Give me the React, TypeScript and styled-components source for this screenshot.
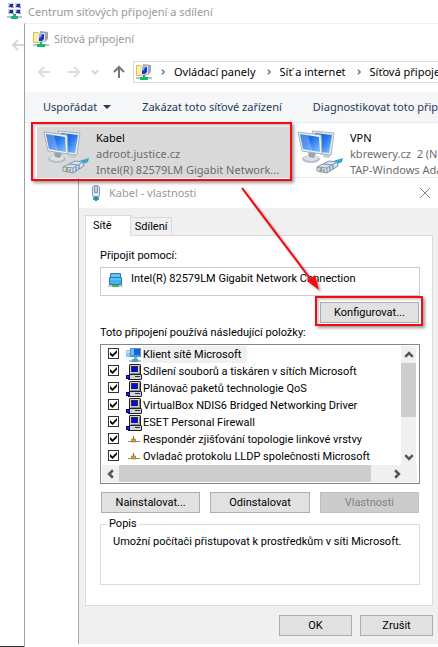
import React from "react";
import styled, { createGlobalStyle, css } from "styled-components";

const uiFont = `"Noto Sans", "Open Sans", sans-serif`;
const dialogFont = `Roboto, "Liberation Sans", Arial, sans-serif`;

const GlobalStyle = createGlobalStyle`
  *, *::before, *::after { box-sizing: border-box; }
  body { margin: 0; background: #fff; overflow: hidden; }
  button { font: inherit; color: inherit; margin: 0; padding: 0; border: 0; background: none; }
  a { color: inherit; text-decoration: none; }
  svg { display: block; flex: none; }
`;

const Screen = styled.main`
  position: relative;
  display: flex;
  flex-direction: column;
  min-height: 100vh;
  overflow: hidden;
  background: #fff;
  font: 11px/16px ${uiFont};
  color: #000;
`;

const TitleBar = styled.header<{ $height: number; $gap: number; $indent: number }>`
  display: flex;
  align-items: center;
  flex: none;
  height: ${(p) => p.$height}px;
  gap: ${(p) => p.$gap}px;
  padding-left: ${(p) => p.$indent}px;
  color: #999;
`;

const Title = styled.h1`
  flex: 1;
  margin: 0;
  font: inherit;
  white-space: nowrap;
`;

const Split = styled.div`
  flex: 1;
  display: grid;
  grid-template-columns: 24px minmax(0, 1fr);
`;

const BackStrip = styled.div`
  padding: 15px 0 0 11px;
  overflow: hidden;
  border-bottom: 1px solid #333;
`;

const IconButton = styled.button`
  display: flex;
  align-items: center;
  justify-content: center;
  flex: none;
`;

const CloseButton = styled(IconButton)`
  margin-right: 7px;
`;

const FolderWindow = styled.section`
  border-left: 1px solid #a0a0a0;
  border-top: 1px solid #f0f0f0;
  background: #fff;
`;

const NavBar = styled.nav`
  display: flex;
  align-items: center;
  height: 38px;
  padding: 0 0 2px 12px;
`;

const NavArrows = styled.div`
  display: grid;
  grid-template-columns: 30px 24px 21px 21px;
  align-items: center;
  justify-items: start;
`;

const AddressBar = styled.div`
  display: flex;
  align-items: center;
  flex: 1;
  min-width: 0;
  overflow: hidden;
  height: 22px;
  padding-left: 2px;
  gap: 8px;
  border: 1px solid #d9d9d9;
  border-right: 0;
  white-space: nowrap;
  a { padding-right: 2px; }
`;

const CommandBar = styled.div`
  display: flex;
  align-items: center;
  gap: 31px;
  height: 31px;
  padding-left: 18px;
  overflow: hidden;
  background: #f5f6f7;
  border-bottom: 1px solid #e8ebef;
  color: #1e395b;
  white-space: nowrap;
`;

const Command = styled.button`
  display: flex;
  align-items: center;
  gap: 6px;
  flex: none;
`;

const Connections = styled.div`
  display: grid;
  grid-template-columns: 254px 254px;
  height: 54px;
  padding-left: 12px;
`;

const Connection = styled.button<{ $selected?: boolean }>`
  position: relative;
  display: flex;
  gap: 6px;
  margin-top: 4px;
  padding: 3px 0 0 6px;
  text-align: left;
  white-space: nowrap;
  background: ${(p) => (p.$selected ? "#d9d9d9" : "transparent")};
`;

const ConnectionText = styled.span`
  display: grid;
  color: #6d6d6d;
  strong { font-weight: 400; color: #000; }
`;

const RedFrame = styled.span<{ $around: string }>`
  position: absolute;
  z-index: 1;
  inset: ${(p) => p.$around};
  border: 2px solid #f50a10;
  box-shadow: 2px 2px 3px rgba(0, 0, 0, 0.4), inset 2px 2px 2px rgba(0, 0, 0, 0.2);
  pointer-events: none;
`;

const Dialog = styled.section`
  margin-left: 53px;
  border-top: 1px solid #ececec;
  border-left: 1px solid #a8a8a8;
  background: #fff;
`;

const DialogBody = styled.div`
  padding: 7px 5px 8px 6px;
  background: #f0f0f0;
  font: 11px/14px ${dialogFont};
`;

const Tabs = styled.div`
  display: flex;
  align-items: flex-end;
  height: 20px;
`;

const Tab = styled.button<{ $active?: boolean }>`
  height: 18px;
  padding: 0 4px;
  border: 1px solid #d9d9d9;
  border-left-width: 0;
  border-bottom: 0;
  ${(p) =>
    p.$active &&
    css`
      position: relative;
      height: 21px;
      margin-bottom: -1px;
      padding: 0 18px 1px 7px;
      border-left-width: 1px;
      background: #fff;
    `}
`;

const Panel = styled.div`
  padding: 13px 12px 20px 14px;
  border: 1px solid #dcdcdc;
  background: #fff;
`;

const Label = styled.div`
  height: 18px;
  white-space: nowrap;
`;

const AdapterBox = styled.div`
  display: flex;
  align-items: flex-start;
  gap: 8px;
  height: 29px;
  padding: 4px 7px;
  border: 1px solid #ccc;
  white-space: nowrap;
`;

const PushButton = styled.button`
  position: relative;
  height: 21px;
  border: 1px solid #adadad;
  background: #e1e1e1;
  text-align: center;
  &:disabled {
    border-color: #bfbfbf;
    background: #ccc;
    color: #838383;
  }
`;

const ButtonRow = styled.div<{ $columns: string; $margin: string }>`
  display: grid;
  grid-template-columns: ${(p) => p.$columns};
  justify-content: end;
  margin: ${(p) => p.$margin};
`;

const ListBox = styled.div`
  display: grid;
  grid-template-columns: minmax(0, 1fr) 16px;
  grid-template-rows: auto 17px;
  padding: 1px 2px 1px 1px;
  border: 1px solid #828790;
`;

const Items = styled.ul`
  margin: 0;
  padding: 0 0 0 6px;
  list-style: none;
  overflow: hidden;
`;

const Item = styled.li`
  display: grid;
  grid-template-columns: 18px 17px max-content;
  align-items: center;
  height: 17px;
`;

const ItemLabel = styled.label<{ $focused?: boolean }>`
  padding: 2px 6px 1px 0;
  background: ${(p) => (p.$focused ? "#f0f0f0" : "transparent")};
`;

const Check = styled.input`
  appearance: none;
  width: 11px;
  height: 11px;
  margin: 0 0 2px;
  border: 1px solid #333;
  background: #fff;
  &:checked::after {
    content: "";
    display: block;
    width: 7px;
    height: 7px;
    margin: 1px;
    background: #000;
    clip-path: polygon(0 30%, 36% 64%, 100% 0, 100% 36%, 36% 100%, 0 68%);
  }
`;

const ScrollBar = styled.div<{ $vertical?: boolean }>`
  display: grid;
  background: #f0f0f0;
  ${(p) =>
    p.$vertical
      ? css`
          grid-template-rows: 17px 54px 1fr 17px;
          margin-right: 1px;
        `
      : css`
          grid-column: 1 / 3;
          grid-template-columns: 17px 252fr 6fr 40px;
        `}
`;

const Thumb = styled.div`
  background: #cdcdcd;
`;

const GroupBox = styled.fieldset`
  min-width: 0;
  height: 68px;
  margin: 0;
  padding: 4px 12px;
  border: 1px solid #dcdcdc;
  legend { margin-left: -6px; padding: 0 2px; }
  p { margin: 0; white-space: nowrap; }
`;

const ArrowOverlay = styled.svg`
  position: absolute;
  left: 238px;
  top: 184px;
  pointer-events: none;
  filter: drop-shadow(2px 2px 1px rgba(0, 0, 0, 0.35));
`;

type Dir = "left" | "right" | "up" | "down";
const turns: Record<Dir, number> = { left: 0, up: 90, right: 180, down: 270 };

const Arrow = ({ dir, color, width = 1 }: { dir: Dir; color: string; width?: number }) => (
  <svg width="14" height="14" viewBox="0 0 14 14" fill="none" stroke={color} strokeWidth={width}>
    <path transform={`rotate(${turns[dir]} 7 7)`} d="M13 7H2M7 2L2 7l5 5" />
  </svg>
);

const Chevron = ({ dir, color, size = 8, width = 2 }: { dir: Dir; color: string; size?: number; width?: number }) => (
  <svg width={size} height={size} viewBox="0 0 8 8" fill="none" stroke={color} strokeWidth={width}>
    <path transform={`rotate(${turns[dir]} 4 4)`} d="M5.500 1L2.500 4l3 3" />
  </svg>
);

const NetworkCenterIcon = () => (
  <svg width="16" height="17" viewBox="0 0 16 17">
    {[[1, 0], [8, 0], [1, 6], [8, 6]].map(([x, y]) => (
      <g key={`${x}-${y}`}>
        <path fill="#cdd3dc" d={`M${x} ${y}h6v5h-6z`} />
        <path fill="#1d2bb5" d={`M${x + 1} ${y + 1}h4v3h-4z`} />
        <path fill="#7d8cf0" d={`M${x + 1} ${y + 1}h1v2h-1z`} />
        <path fill="#8f98a4" d={`M${x + 3} ${y + 4}h3v1h-3z`} />
      </g>
    ))}
    <path fill="#b9c0c6" d="M0 13h15v2H0z" />
    <path fill="#12b96e" d="M6 11h3v2h2v3H4v-3h2z" />
  </svg>
);

const FolderNetworkIcon = () => (
  <svg width="16" height="16" viewBox="0 0 16 16">
    <path fill="#d9c070" d="M0 1h5l1 1h4v10H0z" />
    <path fill="#fbeda4" d="M1 2h5v9H1z" />
    <path fill="#9ca8b6" d="M7 0l8 1v7l-3 3-6-1z" />
    <path fill="#dfe5ec" d="M5 3l7-1v8l-6 1z" />
    <path fill="#2135c4" d="M6 4l5-1v5l-2 2H6z" />
    <path fill="#8eabf8" d="M6 4l3-1-1 3-2 1z" />
    <path fill="#b9c2c8" d="M0 13h16v2H0z" />
    <path fill="#0fbd72" d="M7 11h2v2h3v3H4v-3h3z" />
  </svg>
);

const ConnectionIcon = () => (
  <svg width="47" height="46" viewBox="0 0 47 46">
    <defs>
      <linearGradient id="glass" x1="0" y1="0" x2="1" y2="1">
        <stop offset="0" stopColor="#1258cf" />
        <stop offset=".45" stopColor="#2273ee" />
        <stop offset="1" stopColor="#86c4ff" />
      </linearGradient>
    </defs>
    <path fill="#c3cad0" d="M27 23l7 1-2 4-6-1z" />
    <path fill="#e3e9ee" stroke="#aab4bc" d="M15 1l22 2-3 22-10-1z" />
    <path fill="url(#glass)" d="M18 3l17 2-3 18-8-1z" />
    <ellipse cx="14" cy="29" rx="9" ry="4" fill="#b7c0c7" />
    <ellipse cx="14" cy="28" rx="7" ry="3" fill="#dde2e6" />
    <path fill="#9aa4ab" d="M11 22l8 1-2 5-5-1z" />
    <path fill="#edf2f5" stroke="#a5b1ba" d="M1 2l23 3 1 19-20-3z" />
    <path fill="url(#glass)" d="M3 4l19 3 1 15-17-3z" />
    <path fill="#fff" opacity=".25" d="M3 4l8 1 4 15-9-1z" />
    <path fill="#32a8cf" d="M36 31l10-3-1 4-7 3z" />
    <path fill="#d6e2ee" stroke="#7f95b0" d="M20 37l12-6 8 1 1 4-11 7-10-2z" />
    <path fill="none" stroke="#7f95b0" d="M20 37l10 1 10-6M30 38v5M26 34l9 1" />
    <path fill="#d8ce6b" d="M22 38l4 1v3l-4-1z" />
    <path stroke="#657794" d="M24 38v4M27 39v3M33 37v4M36 35v4" />
  </svg>
);

const CablePlugIcon = () => (
  <svg width="10" height="17" viewBox="0 0 10 17">
    <path fill="#35a9c9" d="M2 11h2v4H2zm4 0h2v4H6z" />
    <path fill="#2385a4" d="M4 12h2v4H4z" />
    <rect x="1.500" y="1.500" width="7" height="10" rx="1" fill="#e3eaf2" stroke="#8496b0" />
    <path fill="#c5d0dc" stroke="#8496b0" d="M3.500 .5h3v7h-3z" />
  </svg>
);

const AdapterIcon = () => (
  <svg width="15" height="16" viewBox="0 0 15 16">
    <path fill="#64c4fa" stroke="#2c78ad" d="M2.500 1.500h10v4h-10z" />
    <path fill="#3db3f5" stroke="#2c78ad" d="M1.500 5.500h12v7h-12z" />
    <path fill="#58c2fa" d="M2 6h11v2H2z" />
    <path fill="#c6cbd0" d="M0 13h15v2H0z" />
    <path fill="#53b84b" d="M4 13h7v2H4z" />
  </svg>
);

const ClientIcon = () => (
  <svg width="16" height="16" viewBox="0 0 16 16">
    <path fill="#8cc8ee" d="M0 3h5v7H0z" />
    <path fill="#d2e9f8" d="M1 4h2v2H1z" />
    <path fill="#4d96d4" d="M4 1h11v9H4z" />
    <path fill="#1c60d6" d="M8 2h6v6H8z" />
    <path fill="#75b9f2" d="M5 2h3v6H5z" />
    <path fill="#7aaccd" d="M8 10h3v2H8z" />
    <path fill="#afbec8" d="M3 13h12v2H3z" />
    <path fill="#4aa3cd" d="M6 12h6v3H6z" />
  </svg>
);

const ServiceIcon = () => (
  <svg width="16" height="16" viewBox="0 0 16 16">
    <path fill="#202020" d="M3 1l1-1h10l1 1v9l1 1v4l-1 1H2v-4l1-1z" />
    <path fill="#d2d2d2" d="M4 1h10v9H4zM3 11h12v4H3z" />
    <path fill="#8a8a8a" d="M13 2h1v8H5V9h8z" />
    <path fill="#303030" d="M5 2h7v6H5z" />
    <path fill="#0b0bd6" d="M6 3h5v5H6z" />
    <path fill="#303030" d="M9 12h5v1H9z" />
    <path fill="#00008b" d="M0 11h4v4H0z" />
    <path fill="#2525d9" d="M1 12h2v2H1z" />
  </svg>
);

const ProtocolIcon = () => (
  <svg width="16" height="16" viewBox="0 0 16 16">
    <path fill="#8b8b8b" d="M2 9h12v1H2z" />
    <path fill="#636363" d="M7 4h1v3H7z" />
    <path fill="#dca325" stroke="#8e661a" strokeWidth=".6" d="M5.500 7h4v3h-4z" />
  </svg>
);

const components = [
  { name: "Klient sítě Microsoft", Icon: ClientIcon },
  { name: "Sdílení souborů a tiskáren v sítích Microsoft", Icon: ServiceIcon },
  { name: "Plánovač paketů technologie QoS", Icon: ServiceIcon },
  { name: "VirtualBox NDIS6 Bridged Networking Driver", Icon: ServiceIcon },
  { name: "ESET Personal Firewall", Icon: ServiceIcon },
  { name: "Respondér zjišťování topologie linkové vrstvy", Icon: ProtocolIcon },
  { name: "Ovladač protokolu LLDP společnosti Microsoft", Icon: ProtocolIcon },
];

const crumbs = ["Ovládací panely", "Síť a internet", "Síťová připojení"];

export default function App() {
  return (
    <>
      <GlobalStyle />
      <Screen>
        <TitleBar $height={23} $gap={5} $indent={7}>
          <NetworkCenterIcon />
          <Title>Centrum síťových připojení a sdílení</Title>
        </TitleBar>
        <Split>
          <BackStrip>
            <IconButton aria-label="Zpět do centra sítí">
              <Arrow dir="left" color="#d8d8d8" width={2} />
            </IconButton>
          </BackStrip>
          <FolderWindow>
            <TitleBar as="div" $height={30} $gap={5} $indent={8}>
              <FolderNetworkIcon />
              <Title as="h2">Síťová připojení</Title>
            </TitleBar>
            <NavBar>
              <NavArrows>
                <IconButton aria-label="Zpět"><Arrow dir="left" color="#dcdcdc" width={2} /></IconButton>
                <IconButton aria-label="Vpřed"><Arrow dir="right" color="#dcdcdc" width={2} /></IconButton>
                <IconButton aria-label="Poslední umístění"><Chevron dir="down" color="#d4d4d4" /></IconButton>
                <IconButton aria-label="Nahoru"><Arrow dir="up" color="#777" width={2} /></IconButton>
              </NavArrows>
              <AddressBar>
                <FolderNetworkIcon />
                {crumbs.map((crumb) => (
                  <React.Fragment key={crumb}>
                    <Chevron dir="right" color="#777" size={6} />
                    <a href="#">{crumb}</a>
                  </React.Fragment>
                ))}
              </AddressBar>
            </NavBar>
            <CommandBar>
              <Command>
                Uspořádat
                <svg width="8" height="4" viewBox="0 0 8 4"><path fill="#1e395b" d="M0 0h8L4 4z" /></svg>
              </Command>
              <Command>Zakázat toto síťové zařízení</Command>
              <Command>Diagnostikovat toto připojení</Command>
            </CommandBar>
            <Connections>
              <Connection $selected>
                <ConnectionIcon />
                <ConnectionText>
                  <strong>Kabel</strong>
                  <span>adroot.justice.cz</span>
                  <span>Intel(R) 82579LM Gigabit Network...</span>
                </ConnectionText>
                <RedFrame $around="-5px -1px -3px -6px" />
              </Connection>
              <Connection>
                <ConnectionIcon />
                <ConnectionText>
                  <strong>VPN</strong>
                  <span>kbrewery.cz&nbsp; 2 (Nepřipojeno)</span>
                  <span>TAP-Windows Adapter V9</span>
                </ConnectionText>
              </Connection>
            </Connections>
            <Dialog role="dialog" aria-label="Kabel - vlastnosti">
              <TitleBar as="div" $height={30} $gap={8} $indent={12}>
                <CablePlugIcon />
                <Title as="h2">Kabel - vlastnosti</Title>
                <CloseButton aria-label="Zavřít">
                  <svg width="12" height="12" viewBox="0 0 12 12" stroke="#888"><path d="M1 1l10 10M11 1L1 11" /></svg>
                </CloseButton>
              </TitleBar>
              <DialogBody>
                <Tabs role="tablist">
                  <Tab role="tab" aria-selected $active>Sítě</Tab>
                  <Tab role="tab" aria-selected={false}>Sdílení</Tab>
                </Tabs>
                <Panel role="tabpanel">
                  <Label>Připojit pomocí:</Label>
                  <AdapterBox>
                    <AdapterIcon />
                    Intel(R) 82579LM Gigabit Network Connection
                  </AdapterBox>
                  <ButtonRow $columns="99px" $margin="6px 1px 3px 0">
                    <PushButton>
                      Konfigurovat...
                      <RedFrame $around="-7px -5px -4px -6px" />
                    </PushButton>
                  </ButtonRow>
                  <Label>Toto připojení používá následující položky:</Label>
                  <ListBox>
                    <Items>
                      {components.map(({ name, Icon }, i) => (
                        <Item key={name}>
                          <Check type="checkbox" id={`component-${i}`} defaultChecked />
                          <Icon />
                          <ItemLabel htmlFor={`component-${i}`} $focused={i === 0}>{name}</ItemLabel>
                        </Item>
                      ))}
                    </Items>
                    <ScrollBar $vertical>
                      <IconButton aria-label="Posunout nahoru"><Chevron dir="up" color="#555" size={10} /></IconButton>
                      <Thumb />
                      <span />
                      <IconButton aria-label="Posunout dolů"><Chevron dir="down" color="#555" size={10} /></IconButton>
                    </ScrollBar>
                    <ScrollBar>
                      <IconButton aria-label="Posunout vlevo"><Chevron dir="left" color="#555" size={10} /></IconButton>
                      <Thumb />
                      <span />
                      <IconButton aria-label="Posunout vpravo"><Chevron dir="right" color="#555" size={10} /></IconButton>
                    </ScrollBar>
                  </ListBox>
                  <ButtonRow $columns="1fr 10px 1fr 10px 1fr" $margin="8px 1px 4px">
                    <PushButton>Nainstalovat...</PushButton>
                    <span />
                    <PushButton>Odinstalovat</PushButton>
                    <span />
                    <PushButton disabled>Vlastnosti</PushButton>
                  </ButtonRow>
                  <GroupBox>
                    <legend>Popis</legend>
                    <p>Umožní počítači přistupovat k prostředkům v síti Microsoft.</p>
                  </GroupBox>
                </Panel>
                <ButtonRow $columns="73px 8px 73px" $margin="9px 0 0">
                  <PushButton>OK</PushButton>
                  <span />
                  <PushButton>Zrušit</PushButton>
                </ButtonRow>
              </DialogBody>
            </Dialog>
          </FolderWindow>
        </Split>
        <ArrowOverlay width="86" height="112" viewBox="0 0 86 112" aria-hidden>
          <path stroke="#f50a10" strokeWidth="2" d="M4 4l70 93" />
          <path fill="#f50a10" d="M81 106l-12-9 8-6z" />
        </ArrowOverlay>
      </Screen>
    </>
  );
}
